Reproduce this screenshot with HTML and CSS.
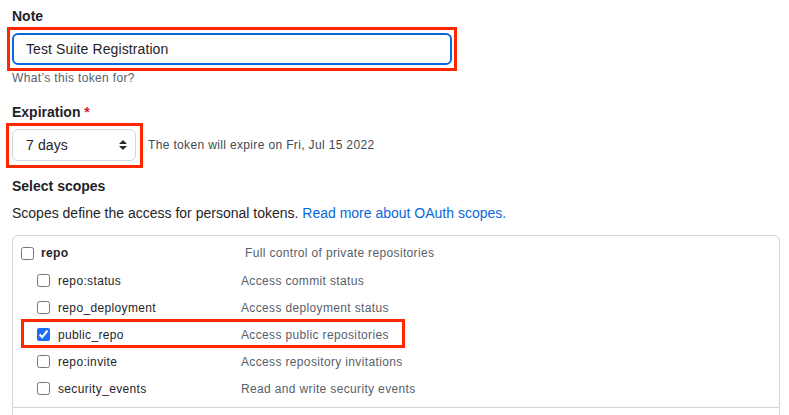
FILE: index.html
```html
<!DOCTYPE html>
<html lang="en">
<head>
<meta charset="utf-8">
<title>New personal access token</title>
<link rel="stylesheet" href="styles.css">
</head>
<body>
<main class="page">
  <label class="field-label" for="note">Note</label>
  <div class="mark mark-input">
    <input class="text-input" id="note" type="text" value="Test Suite Registration">
  </div>
  <p class="hint">What’s this token for?</p>

  <div class="field-label field-gap">Expiration <span class="required">*</span></div>
  <div class="expiry-row">
    <div class="mark mark-select">
      <div class="select">
        <span>7 days</span>
        <svg class="select-arrow" width="16" height="16" viewBox="0 0 16 16" aria-hidden="true"><path fill="#24292f" d="M4.427 9.427l3.396 3.396a.25.25 0 00.354 0l3.396-3.396A.25.25 0 0011.396 9H4.604a.25.25 0 00-.177.427zM4.427 6.573l3.396-3.396a.25.25 0 01.354 0l3.396 3.396A.25.25 0 0111.396 7H4.604a.25.25 0 01-.177-.427z"/></svg>
      </div>
    </div>
    <span class="expiry-note">The token will expire on Fri, Jul 15 2022</span>
  </div>

  <div class="field-label field-gap">Select scopes</div>
  <p class="intro">Scopes define the access for personal tokens. <a class="link" href="#">Read more about OAuth scopes.</a></p>

  <div class="scopes">
    <div class="group">
      <div class="row">
        <input class="check" type="checkbox">
        <span class="name name-main">repo</span>
        <span class="desc">Full control of private repositories</span>
      </div>
      <ul class="sublist">
        <li class="row sub"><input class="check" type="checkbox"><span class="name name-sub">repo:status</span><span class="desc">Access commit status</span></li>
        <li class="row sub"><input class="check" type="checkbox"><span class="name name-sub">repo_deployment</span><span class="desc">Access deployment status</span></li>
        <li class="row sub highlighted"><input class="check" type="checkbox" checked><span class="name name-sub">public_repo</span><span class="desc">Access public repositories</span></li>
        <li class="row sub"><input class="check" type="checkbox"><span class="name name-sub">repo:invite</span><span class="desc">Access repository invitations</span></li>
        <li class="row sub"><input class="check" type="checkbox"><span class="name name-sub">security_events</span><span class="desc">Read and write security events</span></li>
      </ul>
    </div>
    <div class="group group-next"></div>
  </div>
</main>
</body>
</html>
```

FILE: styles.css
```css
html, body {
  margin: 0;
  padding: 0;
  background: #ffffff;
  overflow: hidden;
}

body {
  font-family: "Liberation Sans", Arial, sans-serif;
  color: #1f2328;
}

.page {
  padding: 6px 9px 0 12px;
}

.field-label {
  display: block;
  font-size: 14px;
  line-height: 21px;
  font-weight: 700;
}

.field-gap {
  margin-top: 15px;
}

.required {
  color: #cf222e;
}

.mark {
  position: relative;
  width: fit-content;
}

.mark::after {
  content: "";
  position: absolute;
  border: 3px solid #ff2600;
  pointer-events: none;
}

.mark-input {
  margin-top: 6px;
}

.mark-input::after {
  left: -5px;
  right: -5px;
  top: -6px;
  bottom: -6px;
}

.mark-select::after {
  left: -6px;
  right: -7px;
  top: -6px;
  bottom: -7px;
}

.text-input {
  display: block;
  box-sizing: border-box;
  width: 440px;
  height: 32px;
  margin: 0;
  padding: 0 12px;
  border: 2px solid #0969da;
  border-radius: 6px;
  outline: none;
  font-family: inherit;
  font-size: 14px;
  letter-spacing: 0.1px;
  color: #1f2328;
  background: #ffffff;
}

.hint {
  margin: 4px 0 0 0;
  font-size: 12px;
  line-height: 18px;
  letter-spacing: 0.35px;
  color: #57606a;
}

.expiry-row {
  display: flex;
  align-items: center;
  gap: 12px;
  margin-top: 6px;
}

.select {
  box-sizing: border-box;
  width: 124px;
  height: 32px;
  display: flex;
  align-items: center;
  justify-content: space-between;
  padding: 0 4px 0 13px;
  border: 1px solid #d0d7de;
  border-radius: 6px;
  background: #ffffff;
  font-size: 14px;
  letter-spacing: 0.1px;
}

.select-arrow {
  display: block;
}

.expiry-note {
  font-size: 12px;
  letter-spacing: 0.35px;
  color: #424a53;
}

.intro {
  margin: 6px 0 0 0;
  font-size: 14px;
  line-height: 21px;
  color: #1f2328;
}

.link {
  color: #0969da;
  text-decoration: none;
}

.scopes {
  margin-top: 11px;
  border: 1px solid #d0d7de;
  border-radius: 6px;
  width: 768px;
  box-sizing: border-box;
}

.group {
  padding: 8px 8px 5px 8px;
}

.group-next {
  border-top: 1px solid #d0d7de;
  height: 40px;
}

.row {
  display: flex;
  align-items: center;
  height: 18px;
  font-size: 12px;
  letter-spacing: 0.35px;
}

.check {
  width: 13px;
  height: 13px;
  margin: 0;
  flex: none;
  accent-color: #1a6ef5;
}

.name {
  flex: none;
}

.name-main {
  width: 204px;
  margin-left: 7px;
  font-weight: 700;
}

.name-sub {
  width: 183px;
  margin-left: 8px;
}

.desc {
  color: #57606a;
}

.sublist {
  list-style: none;
  margin: 5px 0 0 0;
  padding: 0 0 0 16px;
}

.sub {
  height: 27px;
}

.highlighted {
  position: relative;
}

.highlighted::after {
  content: "";
  position: absolute;
  left: -16px;
  top: -2px;
  width: 384px;
  height: 29px;
  box-sizing: border-box;
  border: 3px solid #ff2600;
  pointer-events: none;
}
```
